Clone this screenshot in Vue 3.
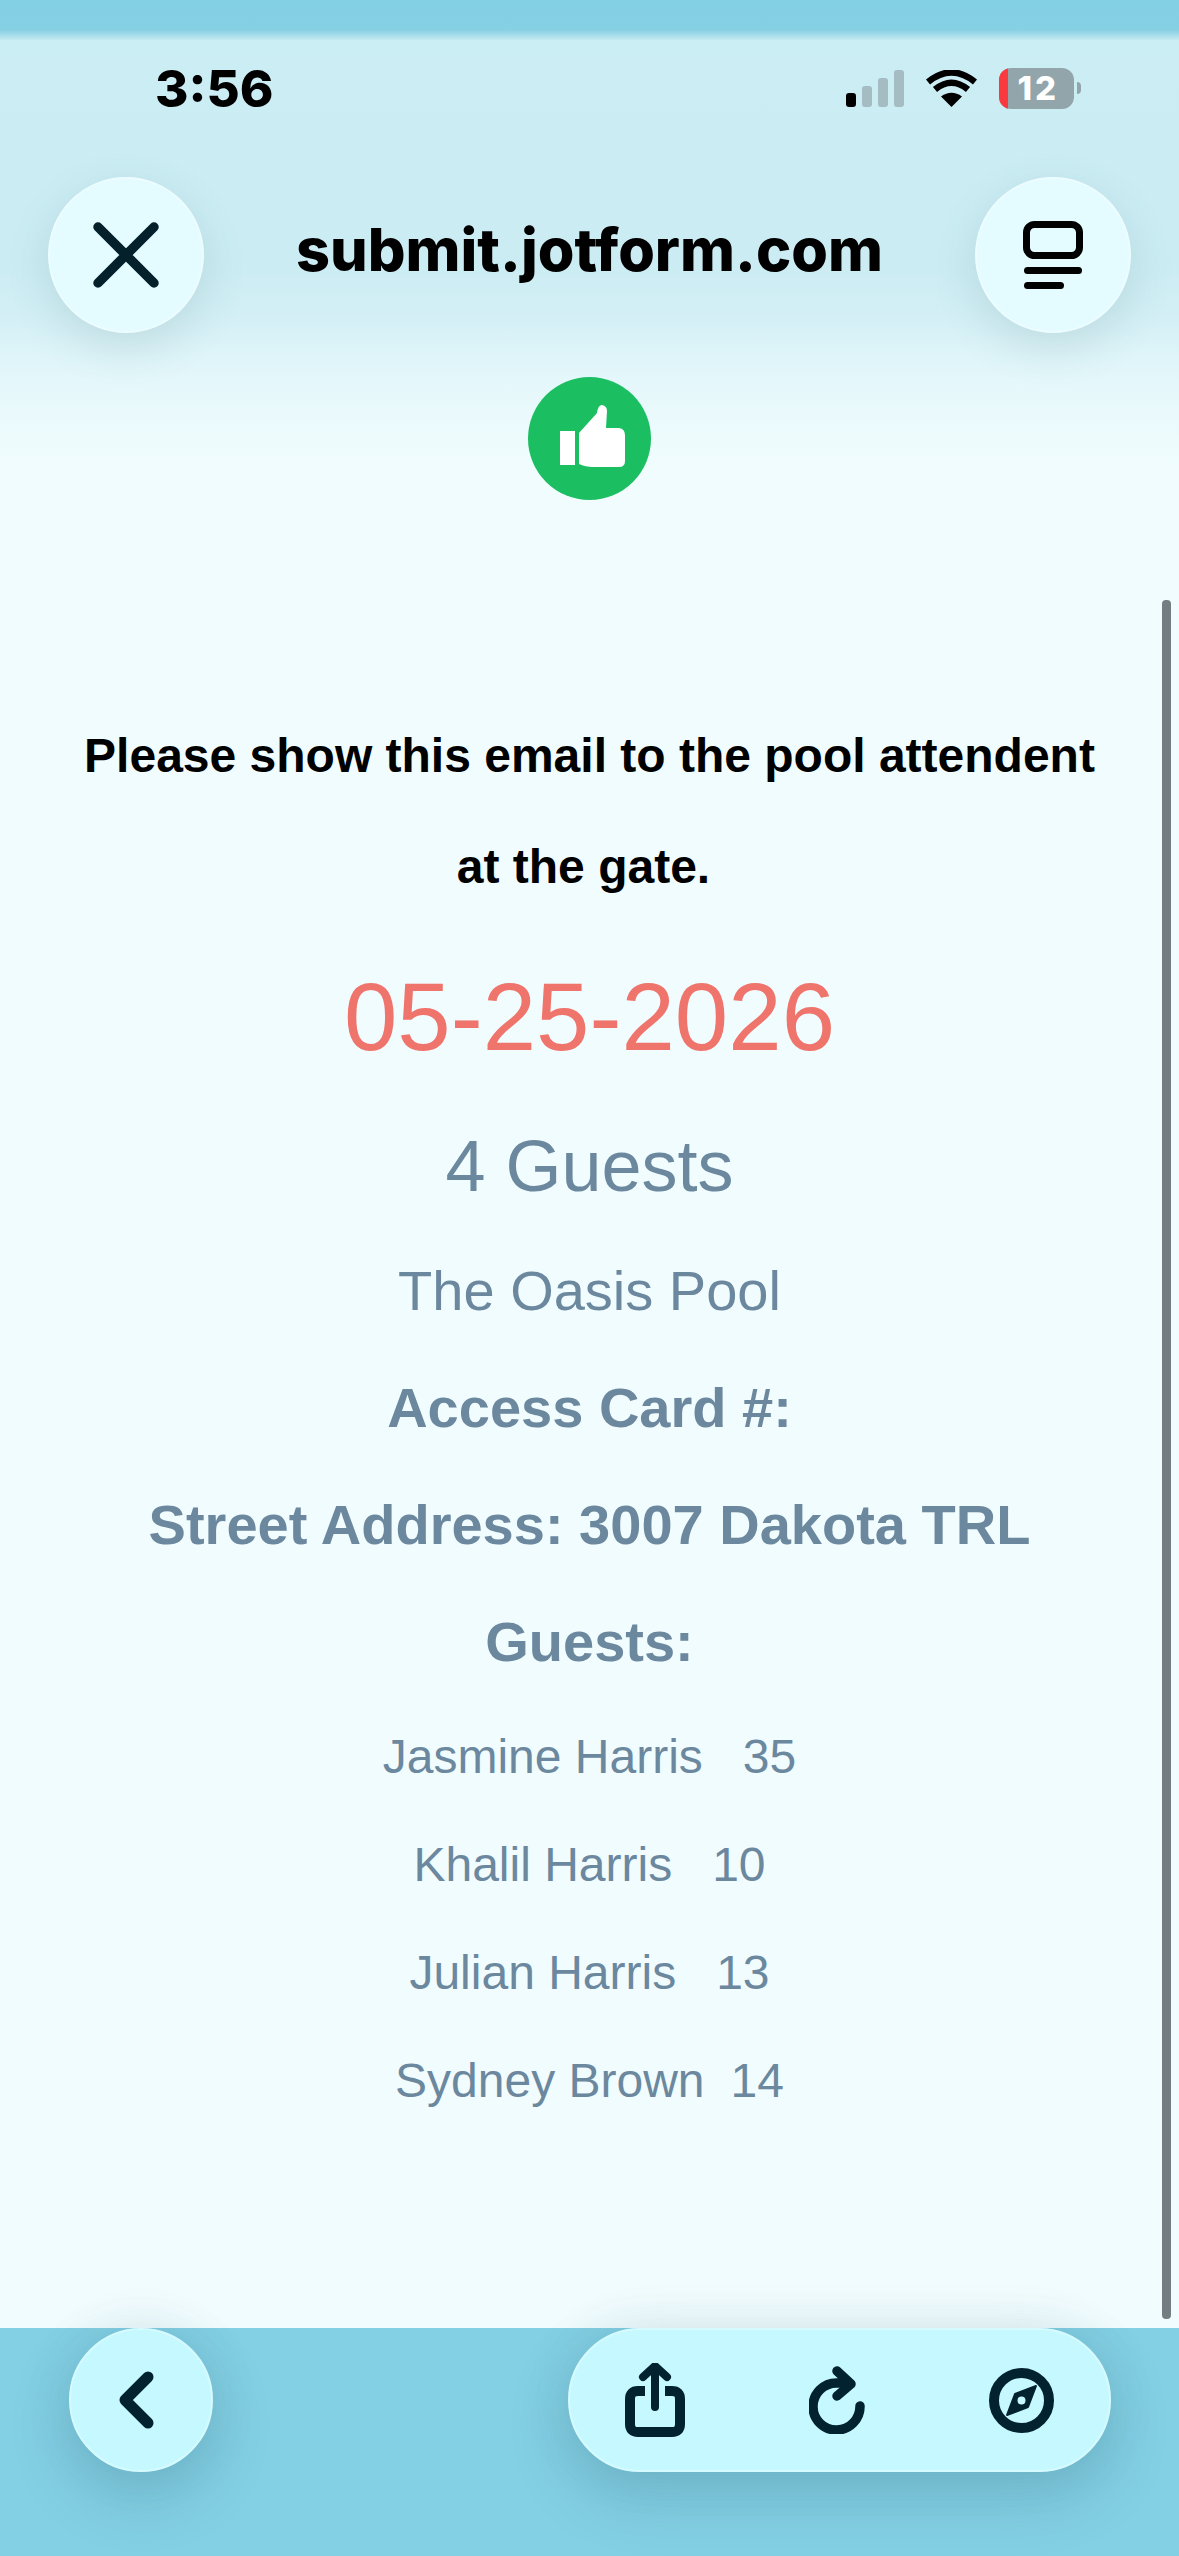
<template>
  <div class="screen">
    <div class="top-band"></div>
    <header class="top-chrome">
      <div class="status-bar">
        <span class="clock">3:56</span>
        <div class="status-icons">
          <svg width="58" height="37" viewBox="0 0 58 37">
            <rect x="0" y="23" width="10" height="14" rx="3" fill="#000" />
            <rect x="16" y="16" width="10" height="21" rx="3" fill="#a5bcc2" />
            <rect x="32" y="8" width="10" height="29" rx="3" fill="#a5bcc2" />
            <rect x="48" y="0" width="10" height="37" rx="3" fill="#a5bcc2" />
          </svg>
          <svg width="51" height="37" viewBox="0 0 51 37">
            <path d="M25.500 37 L15 26.500 Q25.500 19 36 26.500 Z" fill="#000" />
            <path d="M9 19.500 Q25.500 6 42 19.500" fill="none" stroke="#000" stroke-width="6.500" />
            <path d="M2 12 Q25.500 -7 49 12" fill="none" stroke="#000" stroke-width="6.500" />
          </svg>
          <div class="battery">
            <div class="battery-body">
              <span class="battery-low"></span>
              <span class="battery-num">12</span>
            </div>
            <span class="battery-cap"></span>
          </div>
        </div>
      </div>
      <div class="nav-row">
        <button class="round-btn">
          <svg width="66" height="66" viewBox="0 0 66 66">
            <path d="M5 5 L61 61 M61 5 L5 61" fill="none" stroke="#04202b" stroke-width="9.500" stroke-linecap="round" />
          </svg>
        </button>
        <div class="site-title">submit.jotform.com</div>
        <button class="round-btn">
          <svg width="60" height="68" viewBox="0 0 60 68">
            <rect x="3.500" y="3.500" width="53" height="31" rx="8" fill="none" stroke="#000" stroke-width="7" />
            <rect x="1" y="46" width="58" height="7" rx="3.500" fill="#000" />
            <rect x="1" y="61" width="40" height="7" rx="3.500" fill="#000" />
          </svg>
        </button>
      </div>
    </header>

    <main class="content">
      <div class="thumb-badge">
        <svg width="65" height="62" viewBox="0 0 65 62">
          <rect x="0" y="26" width="15" height="34" fill="#fff" />
          <path d="M19 28 L37 8 Q38 0 42 0 Q47 1 47 6 L46 23 L59 23 Q65 24 65 30 L65 56 Q65 62 59 62 L31 62 Q25 62 19 59 Z" fill="#fff" />
        </svg>
      </div>

      <div class="notice">
        <p>Please show this email to the pool attendent</p>
        <p>at the gate.</p>
      </div>
      <div class="visit-date">05-25-2026</div>
      <div class="guest-count">4 Guests</div>
      <div class="line pool-name">The Oasis Pool</div>
      <div class="line bold">Access Card #:</div>
      <div class="line bold">Street Address: 3007 Dakota TRL</div>
      <div class="line bold">Guests:</div>
      <ul class="guest-list">
        <li v-for="guest in guests" :key="guest.name">{{ guest.name }}<span :class="guest.gap">{{ guest.age }}</span></li>
      </ul>
    </main>
    <div class="scrollbar"></div>

    <footer class="bottom-bar">
      <button class="round-btn back-btn">
        <svg width="37" height="58" viewBox="0 0 37 58">
          <path d="M30 6 L7 29 L30 52" fill="none" stroke="#02222f" stroke-width="11" stroke-linecap="round" stroke-linejoin="round" />
        </svg>
      </button>
      <div class="tool-pill">
        <svg width="60" height="74" viewBox="0 0 60 74">
          <path d="M20 28 H13 Q5 28 5 36 V61 Q5 69 13 69 H47 Q55 69 55 61 V36 Q55 28 47 28 H40" fill="none" stroke="#02222f" stroke-width="10" />
          <path d="M30 44 V4 M18 14 L30 3 L42 14" fill="none" stroke="#02222f" stroke-width="8" stroke-linecap="round" stroke-linejoin="round" />
        </svg>
        <svg width="56" height="68" viewBox="0 0 56 68">
          <path d="M51 40 A23.500 23.500 0 1 1 27.500 17 H36" fill="none" stroke="#02222f" stroke-width="9.500" stroke-linecap="round" />
          <path d="M28 5 L42 18 L28 30" fill="none" stroke="#02222f" stroke-width="9.500" stroke-linecap="round" stroke-linejoin="round" />
        </svg>
        <svg width="65" height="65" viewBox="0 0 65 65">
          <circle cx="32.500" cy="32.500" r="27.500" fill="none" stroke="#02222f" stroke-width="10" />
          <path fill-rule="evenodd" d="M47 18 L39 39 L18 47 L26 26 Z M32.500 28.500 A4 4 0 1 0 32.500 36.500 A4 4 0 1 0 32.500 28.500 Z" fill="#02222f" />
          <path d="M47 18 L39 39 L18 47 L26 26 Z" fill="none" stroke="#02222f" stroke-width="2" stroke-linejoin="round" />
        </svg>
      </div>
    </footer>
  </div>
</template>

<script setup>
const guests = [
  { name: 'Jasmine Harris', age: 35, gap: 'age' },
  { name: 'Khalil Harris', age: 10, gap: 'age' },
  { name: 'Julian Harris', age: 13, gap: 'age' },
  { name: 'Sydney Brown', age: 14, gap: 'age narrow' }
]
</script>

<style>
html, body { margin: 0; background: #f1fcfe; }
</style>

<style scoped>
.screen {
  position: relative;
  width: 1179px;
  height: 2556px;
  overflow: hidden;
  display: flex;
  flex-direction: column;
  background: #f1fcfe;
  font-family: "Liberation Sans", Arial, sans-serif;
}

.top-band {
  position: absolute;
  top: 0;
  left: 0;
  right: 0;
  height: 40px;
  background: linear-gradient(#83cfe3 0, #86d0e3 75%, #c5e9f1 100%);
}

.top-chrome {
  position: absolute;
  top: 40px;
  left: 0;
  right: 0;
  height: 450px;
  background: linear-gradient(#cbedf4 0, #cbecf3 49%, #d2eff5 60%, #e4f7fa 75%, #effcfe 91%, #f1fcfe 100%);
}

.status-bar {
  display: flex;
  justify-content: space-between;
  align-items: center;
  height: 50px;
  margin-top: 23px;
  padding: 0 98px 0 155px;
}
.clock { font-family: Inter, sans-serif; font-weight: 800; font-size: 51px; color: #000; }
.status-icons { display: flex; align-items: center; gap: 22px; }
.battery { display: flex; align-items: center; gap: 3px; }
.battery-body {
  position: relative;
  width: 75px;
  height: 41px;
  border-radius: 12px;
  background: #92a5ab;
  overflow: hidden;
  display: flex;
  align-items: center;
  justify-content: flex-end;
}
.battery-low { position: absolute; left: 0; top: 0; bottom: 0; width: 9px; background: #fb3a40; }
.battery-num { font-family: Inter, sans-serif; font-weight: 800; font-size: 33px; letter-spacing: 3px; color: #fff; padding-right: 15px; }
.battery-cap { width: 4px; height: 12px; background: #92a5ab; border-radius: 0 6px 6px 0; }

.nav-row {
  display: flex;
  justify-content: space-between;
  align-items: center;
  margin-top: 64px;
  padding: 0 48px;
}
.round-btn {
  flex: none;
  width: 156px;
  height: 156px;
  padding: 0;
  border: 2px solid #ecfcff;
  border-radius: 50%;
  background: #e4fcff;
  box-shadow: 0 14px 44px rgba(60, 110, 125, 0.16);
  display: flex;
  align-items: center;
  justify-content: center;
}
.site-title {
  font-family: Inter, sans-serif;
  font-weight: 800;
  font-size: 59.300px;
  color: #000;
  margin-top: -12px;
}

.content {
  position: relative;
  margin-top: 377px;
  display: flex;
  flex-direction: column;
  align-items: center;
  color: #6b889e;
  text-align: center;
}
.thumb-badge {
  box-sizing: border-box;
  width: 123px;
  height: 123px;
  padding: 0 0 6px 5px;
  border-radius: 50%;
  background: #1bbf62;
  display: flex;
  align-items: center;
  justify-content: center;
  filter: blur(0.6px);
}
.notice { margin-top: 200px; color: #000; font-weight: 700; font-size: 48px; }
.notice p { margin: 0; height: 111px; line-height: 111px; white-space: nowrap; }
.notice p:last-child { margin-left: -12px; }
.visit-date { margin-top: 40px; font-size: 96px; line-height: 110px; color: #ef746c; }
.guest-count { margin-top: 52px; font-size: 72px; line-height: 84px; }
.line { margin-top: 42px; font-size: 56px; line-height: 75px; }
.pool-name { margin-top: 45px; }
.bold { font-weight: 700; }
.guest-list { list-style: none; margin: 24px 0 0; padding: 0; font-size: 48px; }
.guest-list li { height: 108px; line-height: 108px; white-space: nowrap; }
.age { margin-left: 40px; }
.age.narrow { margin-left: 26px; }

.scrollbar {
  position: absolute;
  top: 600px;
  right: 8px;
  width: 9px;
  height: 1719px;
  border-radius: 4px;
  background: #747d81;
}

.bottom-bar {
  position: absolute;
  left: 0;
  right: 0;
  bottom: 0;
  height: 228px;
  background: #83cfe3;
  display: flex;
  justify-content: space-between;
  align-items: flex-start;
  padding: 0 69px;
}
.back-btn {
  width: 144px;
  height: 144px;
  background: #c6f8ff;
  border-color: #d6fbff;
  box-shadow: 0 24px 60px rgba(50, 100, 120, 0.22), 0 0 50px rgba(50, 100, 120, 0.1);
  padding-right: 10px;
}
.tool-pill {
  width: 543px;
  height: 144px;
  box-sizing: border-box;
  border: 2px solid #d6fbff;
  border-radius: 72px;
  background: #c6f8ff;
  box-shadow: 0 24px 60px rgba(50, 100, 120, 0.22), 0 0 50px rgba(50, 100, 120, 0.1);
  display: flex;
  align-items: center;
  justify-content: space-between;
  padding: 0 55px;
  margin-right: -1px;
}
</style>
